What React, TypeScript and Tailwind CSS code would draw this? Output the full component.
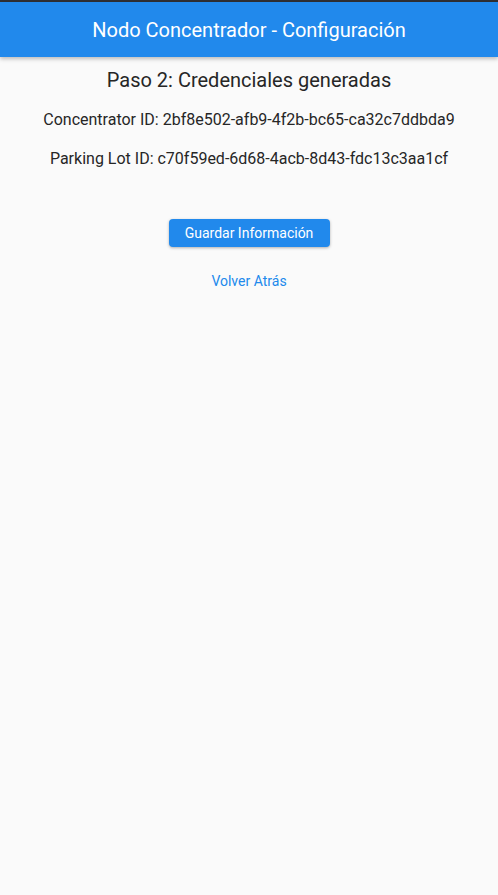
function AppBar() {
  return (
    <header className="flex h-[57px] flex-col">
      <div className="h-[2px] bg-[#2f2f33]" />
      <div className="flex flex-1 items-center justify-center bg-[#2189ec] shadow-[0_2px_4px_rgba(0,0,0,0.25)]">
        <h1 className="text-[20px] leading-[24px] text-white">
          Nodo Concentrador - Configuración
        </h1>
      </div>
    </header>
  );
}

export default function App() {
  return (
    <div
      className="flex h-[895px] w-[498px] flex-col overflow-hidden bg-[#fafafa]"
      style={{ fontFamily: "Roboto, 'Noto Sans', sans-serif" }}
    >
      <AppBar />
      <main className="flex flex-col items-center pt-[11px] text-[#262626]">
        <h2 className="text-[20px] leading-[24px]">Paso 2: Credenciales generadas</h2>
        <p className="mt-[18px] text-[16px] leading-[20px]">
          Concentrator ID: 2bf8e502-afb9-4f2b-bc65-ca32c7ddbda9
        </p>
        <p className="mt-[19px] text-[16px] leading-[20px]">
          Parking Lot ID: c70f59ed-6d68-4acb-8d43-fdc13c3aa1cf
        </p>
        <button className="mt-[50px] h-[28px] w-[161px] rounded-[4px] bg-[#2189ec] text-[14px] text-white shadow-[0_1px_3px_rgba(0,0,0,0.3)]">
          Guardar Información
        </button>
        <button className="mt-[24px] text-[14px] leading-[20px] text-[#2189ec]">
          Volver Atrás
        </button>
      </main>
    </div>
  );
}
